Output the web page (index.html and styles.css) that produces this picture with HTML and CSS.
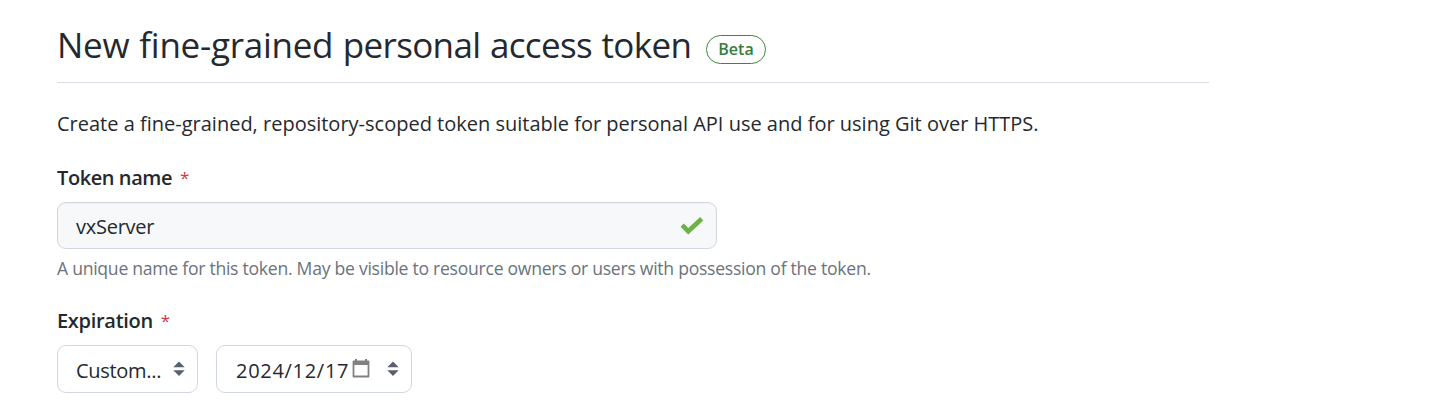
FILE: index.html
```html
<!DOCTYPE html>
<html lang="en">
<head>
<meta charset="utf-8">
<title>New fine-grained personal access token</title>
<link rel="stylesheet" href="styles.css">
</head>
<body>
<main class="page">
  <header class="page-header">
    <h1 class="title"><span class="title-lead">New fine-grained</span> personal access token</h1>
    <span class="badge">Beta</span>
  </header>
  <p class="intro">Create a fine-grained, repository-scoped token suitable for personal API use and for using Git over HTTPS.</p>
  <div class="label"><span class="label-name">Token name</span><span class="required">*</span></div>
  <div class="field text-field">
    <span class="value name-value">vxServer</span>
    <svg class="check" width="24" height="20" viewBox="0 0 24 20"><path d="M2.2 9.2 8.3 15.3 21.7 2.8" fill="none" stroke="#6cb244" stroke-width="4.6"/></svg>
  </div>
  <p class="note">A unique name for this token. May be visible to resource owners or users with possession of the token.</p>
  <div class="label"><span class="label-exp">Expiration</span><span class="required">*</span></div>
  <div class="row">
    <div class="field select">
      <span class="value custom-value">Custom...</span>
      <svg class="arrows" width="12" height="16" viewBox="0 0 12 16"><path d="M0.3 6.2h11.4L6 0.4zM0.3 9.2h11.4L6 15z" fill="#586069"/></svg>
    </div>
    <div class="field date">
      <span class="value date-value">2024/12/17</span>
      <svg class="calendar" width="18" height="19" viewBox="0 0 18 19"><path d="M1.5 2.5h15v15h-15z" fill="none" stroke="#808080" stroke-width="1.8" stroke-linejoin="round"/><path d="M1.5 2h15v4h-15zM3 0h2v3H3zM13 0h2v3h-2z" fill="#808080"/></svg>
      <svg class="arrows" width="12" height="16" viewBox="0 0 12 16"><path d="M0.3 6.2h11.4L6 0.4zM0.3 9.2h11.4L6 15z" fill="#586069"/></svg>
    </div>
  </div>
</main>
</body>
</html>
```

FILE: styles.css
```css
* { box-sizing: border-box; }
body {
  margin: 0;
  background: #fff;
  color: #24292f;
  font-family: "Open Sans", "Noto Sans", sans-serif;
}
.page { width: 1209px; padding-left: 57px; }
.page-header {
  display: flex;
  height: 83px;
  padding-top: 20px;
  border-bottom: 1px solid #d8dee4;
}
.title {
  width: 649px;
  margin: 0;
  font-size: 35px;
  line-height: 50px;
  font-weight: 370;
  letter-spacing: -0.67px;
  word-spacing: 1.2px;
  white-space: nowrap;
}
.title-lead { letter-spacing: -0.27px; }
.badge {
  width: 60px;
  height: 29px;
  margin-top: 15px;
  border: 1px solid #378a3c;
  border-radius: 15px;
  color: #377d3c;
  font-size: 16px;
  font-weight: 600;
  line-height: 27px;
  text-align: center;
}
.intro {
  margin: 26px 0 0;
  font-size: 20px;
  line-height: 30px;
  letter-spacing: 0;
  font-weight: 380;
  white-space: nowrap;
}
.label {
  display: flex;
  gap: 8px;
  height: 30px;
  margin-top: 24px;
  font-size: 20px;
  line-height: 30px;
  font-weight: 600;
  letter-spacing: -0.42px;
}
.label-exp { letter-spacing: -0.3px; }
.required { color: #cb3a42; font-size: 17px; font-weight: 400; }
.field {
  display: flex;
  align-items: center;
  border: 1px solid #d0d7de;
  border-radius: 9px;
  font-size: 20px;
  font-weight: 380;
  background: #fff;
}
.text-field {
  justify-content: space-between;
  width: 660px;
  height: 47px;
  margin-top: 9px;
  padding: 0 12px 0 18px;
  background: #f6f8fa;
  box-shadow: inset 0 1px 0 #f0f3f6;
}
.note {
  margin: 6px 0 0;
  color: #6a737d;
  font-size: 17.6px;
  line-height: 27px;
  letter-spacing: -0.27px;
  font-weight: 380;
  white-space: nowrap;
}
.row { display: flex; gap: 18px; margin-top: 9px; }
.select, .date { height: 48px; }
.select { justify-content: space-between; width: 141px; padding: 0 12px 0 18px; }
.date { width: 196px; padding: 0 12px 0 19px; }
.date-value { width: 116px; letter-spacing: 0.7px; }
.name-value { letter-spacing: -0.25px; }
.custom-value { letter-spacing: -0.3px; }
.calendar { margin-top: -2px; }
.date .arrows { margin-left: auto; }
.value { padding-top: 2px; white-space: nowrap; }
```
